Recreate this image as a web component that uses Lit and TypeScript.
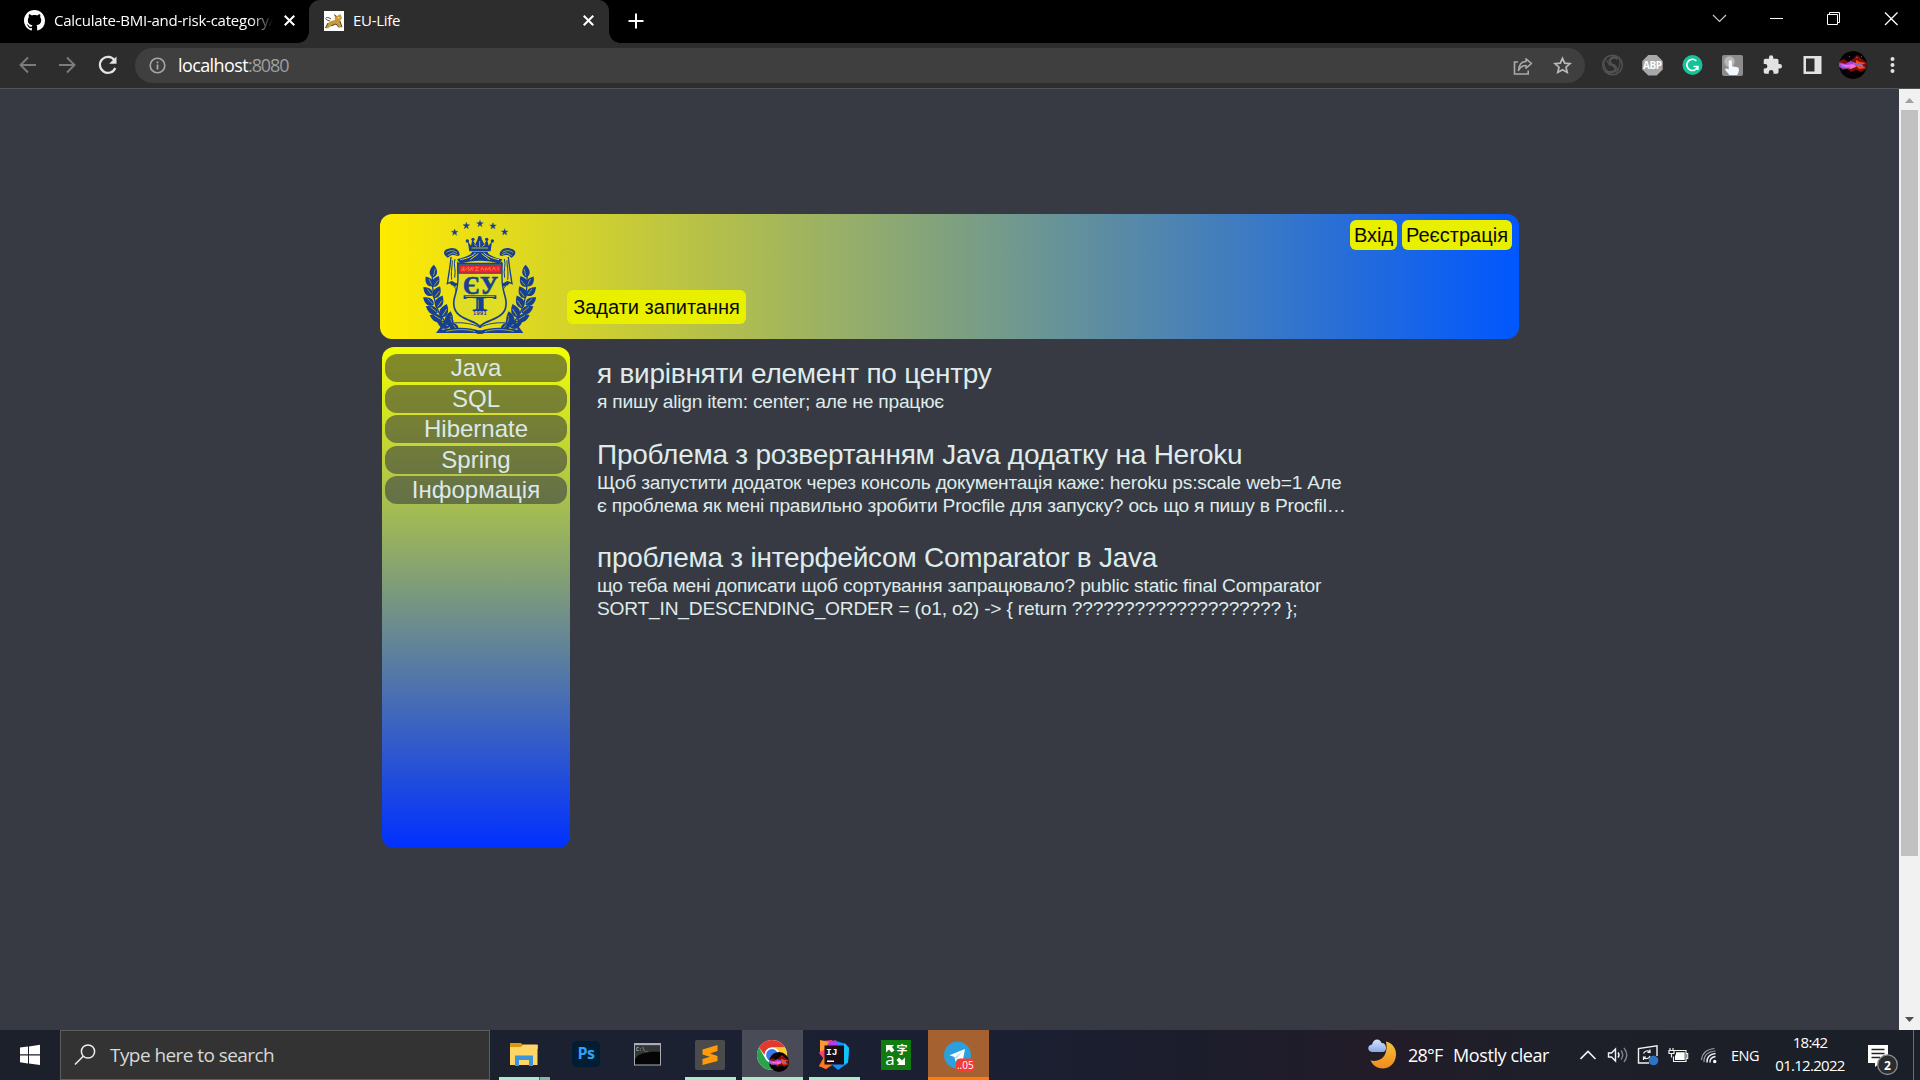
import { LitElement, html, svg, css } from "lit";
import { customElement } from "lit/decorators.js";

const closeIcon = html`<svg class="x" viewBox="0 0 12 12"><path d="M1.6 1.6 10.4 10.4M10.4 1.6 1.6 10.4" stroke="#fff" stroke-width="1.9" /></svg>`;

const star = (x: number, y: number) =>
  svg`<path transform="translate(${x} ${y})" d="M0-10 2.6-3.2 10-3 4 1.4 6.2 9 0 4.6-6.2 9-4 1.4-10-3-2.6-3.2Z" stroke="#173f93" stroke-width="1" />`;

const leaf = (x: number, y: number, r: number, s = 1) =>
  svg`<path transform="translate(${x} ${y}) rotate(${r}) scale(${s})" d="M0 0C-13-7-13-20 0-34 13-20 13-7 0 0Z" /><path transform="translate(${x} ${y}) rotate(${r}) scale(${s})" d="M1-5 4-23" stroke="#dcd92a" stroke-width="1.500" />`;

const halfWreath = svg`
  <path d="M122 340C84 326 48 280 52 172" fill="none" stroke="#173f93" stroke-width="4" />
  ${leaf(54, 188, 4, 1.15)}${leaf(52, 214, -34, 1.05)}${leaf(54, 216, 28, 1.1)}
  ${leaf(52, 242, -46, 1.1)}${leaf(56, 250, 28, 1.2)}${leaf(56, 270, -54, 1.15)}
  ${leaf(64, 280, 26, 1.25)}${leaf(68, 294, -60, 1.2)}${leaf(79, 308, 22, 1.3)}
  ${leaf(82, 316, -68, 1.2)}${leaf(98, 330, 12, 1.25)}${leaf(104, 336, -68, 1.2)}
  ${leaf(130, 349, -48, 1.15)}${leaf(112, 330, -24, 0.9)}`;

const halfMantle = svg`
  <path d="M98 128C82 118 84 104 100 101 118 95 134 104 134 120 128 128 124 118 112 120 104 121 104 126 98 128Z" />
  <path d="M94 113C102 106 116 104 126 113M98 122 114 113 128 120" fill="none" stroke="#dcd92a" stroke-width="2" />
  <path d="M108 126C106 152 101 178 97 206L110 200 122 209 130 204 128 140" fill="none" stroke="#173f93" stroke-width="4" />
  <path d="M112 136C112 156 107 168 110 194M120 132C114 150 124 164 119 188" fill="none" stroke="#173f93" stroke-width="3" />
  <path d="M103 204 112 199 127 206 122 215 110 211Z" />
  <path d="M116 214C128 222 120 232 122 242M130 210C138 222 128 236 124 248" fill="none" stroke="#173f93" stroke-width="3" />`;

const crest = html`<svg class="crest" viewBox="0 0 390 375">
  <g fill="#173f93">
    ${star(119, 52)}${star(154, 32)}${star(195, 26)}${star(234, 33)}${star(269, 51)}
    <g>${halfWreath}${halfMantle}</g>
    <g transform="matrix(-1 0 0 1 388 0)">${halfWreath}${halfMantle}</g>
    <path d="M158 78 168 92 172 73 181 88 188 72 194 64 200 72 208 88 216 73 221 92 231 78 227 109H163Z" />
    <circle cx="194" cy="69" r="6" /><circle cx="157" cy="78" r="5" /><circle cx="232" cy="78" r="5" /><circle cx="174" cy="73" r="5" /><circle cx="215" cy="73" r="5" />
    <path d="M170 99H219M178 88 186 94M202 94 211 88M194 78V96" stroke="#e0dd25" stroke-width="2.4" />
    <path d="M172 110H217C222 122 242 129 262 133L254 146C216 134 174 134 136 146L126 133C146 128 166 122 172 110Z" />
    <path d="M136 134C154 131 174 124 182 113M252 134C236 131 214 124 206 113M166 134 190 116M224 134 200 116" stroke="#e0dd25" stroke-width="3" fill="none" />
    <path d="M126 145H263V186C263 236 282 247 274 280 266 314 214 318 195 338 176 318 124 314 116 280 108 247 127 236 127 186Z" />
    <path d="M131 147H259V186C259 238 277 250 269 279 261 309 214 312 195 331 176 312 129 309 121 279 113 250 131 238 131 186Z" fill="#e0dd25" />
    <path d="M127 143H262V149H127Z" />
    <path d="M130 149H260V176H130Z" />
    <path d="M133 151H257V173H133Z" fill="#f0252b" />
    <path d="M139 166C146 150 151 157 143 166 154 168 154 155 162 158 153 173 170 162 171 157L166 167M176 157 172 167M180 158 190 157 181 167 192 167M197 166 202 157 207 166M211 167 213 158 218 165 224 157 226 167M231 166 237 157 242 166M247 158C254 157 250 167 247 164" fill="none" stroke="#f3a052" stroke-width="2" />
    <text x="197" y="236" class="cl">ЄУ</text>
    <path d="M146 241H244V252H238C235 248 226 248 206 250V279C206 284 212 283 217 284V288H173V284C180 283 184 284 184 279V250C164 248 155 248 152 252H146Z" />
    <path d="M151 244.500H239" stroke="#e0dd25" stroke-width="2" />
    <path d="M190 254V282" stroke="#e0dd25" stroke-width="1.500" />
    <text x="195" y="300" class="cy">1991</text>
    <path d="M92 316H104L80 345C120 336 160 336 190 346H200C230 336 270 336 310 345L286 316H297L325 354H208C202 358 188 358 182 354H63Z" />
    <path d="M94 349C130 341 160 343 180 350M210 350C230 343 260 341 296 349" fill="none" stroke="#e0dd25" stroke-width="2" />
    <path d="M106 325C140 320 176 326 195 338 214 326 250 320 284 325" fill="none" stroke="#173f93" stroke-width="3" />
  </g>
</svg>`;

const nebula = (cls: string) => html`<svg class=${cls} viewBox="0 0 28 28">
  <circle cx="14" cy="14" r="14" fill="#050004" />
  <path d="M0 10 5 8 9 11 14 8 18 4 23 8 28 12 27 18 22 21 17 19 12 21 8 18 3 19Z" fill="#7c1008" />
  <path d="M0 11 6 13 12 10 17 13 16 17 10 15 4 18 0 16Z" fill="#a640e0" />
  <path d="M1 13 8 14 14 13 18 15 12 18 5 16Z" fill="#ff6ad0" />
  <path d="M17 9 21 11 27 12 22 14 27 17 20 18 17 15Z" fill="#f8481c" />
  <path d="M2 15 7 17 11 16M14 12 18 13 24 15" stroke="#5b7bff" stroke-width="1.500" fill="none" />
  <path d="M17 6 19 7M22 5 23 6M10 5 11 6" stroke="#e0300c" />
</svg>`;

@customElement("browser-chrome")
class BrowserChrome extends LitElement {
  static styles = css`
    :host { display: block; font-family: "Open Sans", "Noto Sans", sans-serif; color: #fff; }
    svg { display: block; flex: none; }
    .tabs { height: 43px; background: #000; display: flex; align-items: center; }
    .tab { height: 43px; box-sizing: border-box; display: flex; align-items: center; font-size: 15px; }
    .first { width: 309px; padding: 0 0 2px 24px; }
    .active { width: 300px; background: #2d2d2d; border-radius: 11px 11px 0 0; padding: 0 0 2px 15px; position: relative; }
    .active::before, .active::after { content: ""; position: absolute; bottom: 0; width: 11px; height: 11px; }
    .active::before { left: -11px; background: radial-gradient(circle at 0 0, #000 10.500px, #2d2d2d 11px); }
    .active::after { right: -11px; background: radial-gradient(circle at 100% 0, #000 10.500px, #2d2d2d 11px); }
    .name { white-space: nowrap; overflow: hidden; line-height: 22px; padding-bottom: 1px; }
    .first .name { margin-left: 9px; width: 219px; letter-spacing: -0.24px; -webkit-mask-image: linear-gradient(90deg, #000 90%, transparent 100%); mask-image: linear-gradient(90deg, #000 90%, transparent 100%); }
    .active .name { margin-left: 9px; width: 227px; letter-spacing: -0.3px; }
    .x { width: 13px; height: 13px; }
    .first .x { margin-left: 10px; }
    .active .x { margin-left: 2px; }
    .plus { width: 16px; height: 16px; margin: 0 0 2px 19px; }
    .win { width: 220px; height: 36px; margin: 0 0 7px auto; }
    .bar { height: 45px; background: #2d2d2d; display: flex; align-items: center; }
    .nav { width: 135px; height: 45px; }
    .omni { width: 1450px; height: 35px; border-radius: 18px; background: #3f3f3f; display: flex; align-items: center; }
    .info { width: 17px; height: 17px; margin-left: 14px; }
    .url { margin-left: 12px; flex: 1; font-size: 18px; letter-spacing: -0.6px; line-height: 24px; padding-bottom: 1px; }
    .port { color: #9d9fa3; letter-spacing: -1.1px; }
    .acts { width: 95px; height: 35px; }
    .wrap { position: relative; width: 335px; height: 45px; }
    .face { position: absolute; left: 254px; top: 8px; width: 28px; height: 28px; border-radius: 50%; }
    .e { font: 700 10px "Open Sans", sans-serif; letter-spacing: -0.4px; }
  `;
  render() {
    return html`
      <div class="tabs">
        <div class="tab first">
          <svg width="21" height="21" viewBox="0 0 16 16"><path fill="#fff" d="M8 0C3.580 0 0 3.580 0 8c0 3.540 2.290 6.530 5.470 7.590.4.070.55-.17.55-.38 0-.19-.01-.82-.01-1.490-2.010.37-2.530-.49-2.690-.94-.09-.23-.48-.94-.82-1.130-.28-.15-.68-.52-.01-.53.63-.01 1.080.58 1.230.82.72 1.210 1.870.87 2.330.66.070-.52.28-.87.51-1.070-1.780-.2-3.640-.89-3.640-3.950 0-.87.31-1.590.82-2.150-.08-.2-.36-1.020.08-2.120 0 0 .67-.21 2.200.82.64-.18 1.320-.27 2-.27s1.360.09 2 .27c1.530-1.040 2.200-.82 2.200-.82.44 1.100.16 1.920.08 2.120.51.56.82 1.270.82 2.150 0 3.070-1.870 3.750-3.650 3.950.29.25.54.73.54 1.480 0 1.070-.01 1.930-.01 2.200 0 .21.15.46.55.38A8.010 8.010 0 0 0 16 8c0-4.420-3.580-8-8-8Z" /></svg>
          <div class="name">Calculate-BMI-and-risk-category/</div>
          ${closeIcon}
        </div>
        <div class="tab active">
          <svg width="20" height="20" viewBox="0 0 20 20">
            <path d="M0 0H20V20H0Z" fill="#fff" />
            <path d="M10.500 3.500 13 5 16.500 3 18 7 16 10 18 16.500 15 16.500 12 13 7 15 4 17.500 1 17 4 12 7 10 11 9Z" fill="#c99a3a" />
            <path d="M7 8C3 5 0 7 3 9L6 10M10.500 3.500 12 5.500M4 12 1.500 17M7 15 12 13 15 16.500M16 10 18 16" stroke="#2d2418" stroke-width=".8" fill="none" />
            <path d="M13 6 16 6 15 8Z" fill="#f3d36a" />
          </svg>
          <div class="name">EU-Life</div>
          ${closeIcon}
        </div>
        <svg class="plus" viewBox="0 0 16 16"><path d="M8 .5V15.500M.5 8H15.500" stroke="#fff" stroke-width="2" /></svg>
        <svg class="win" viewBox="0 0 220 36" fill="none" stroke="#fff">
          <path d="M13 15 19.500 21.500 26 15" stroke="#c8c8c8" stroke-width="1.200" />
          <path d="M70 18.500H83" />
          <path d="M127.500 14.500H137.500V24.500H127.500ZM129.500 14.500V12.500H139.500V22.500H137.500" />
          <path d="M185 12.500 197.500 25M197.500 12.500 185 25" stroke-width="1.300" />
        </svg>
      </div>
      <div class="bar">
        <svg class="nav" viewBox="0 0 135 45" fill="none" stroke="#7c7c7c" stroke-width="1.900">
          <path d="M36 22H21M28 14.500 20.500 22 28 29.500" />
          <path d="M59 22H74M67 14.500 74.500 22 67 29.500" />
          <path d="M114.500 17.300A8 8 0 1 0 115.300 25" stroke="#e4e4e4" stroke-width="2.200" />
          <path d="M116.500 13.500V20.800H109.200Z" fill="#e4e4e4" stroke="none" />
        </svg>
        <div class="omni">
          <svg class="info" viewBox="0 0 17 17"><circle cx="8.500" cy="8.500" r="7.300" fill="none" stroke="#a5a6aa" stroke-width="1.600" /><path d="M8.500 7.500V12.500M8.500 4.500V6.200" stroke="#a5a6aa" stroke-width="1.800" /></svg>
          <div class="url">localhost<span class="port">:8080</span></div>
          <svg class="acts" viewBox="1490 48 95 35" fill="none" stroke="#a9aaad" stroke-width="1.600">
            <path d="M1518 62H1514.500V74H1528.200V70.500" />
            <path d="M1518.500 70.500C1519 64.500 1521.500 61.500 1526 61.500V58.800L1531.500 63.500 1526 68.200V65.500C1522 65.500 1520 67.500 1518.500 70.500Z" stroke-linejoin="round" />
            <path d="M1562.500 58.300 1564.700 63.100 1570 63.700 1566 67.200 1567.200 72.400 1562.500 69.700 1557.800 72.400 1559 67.200 1555 63.700 1560.300 63.100Z" stroke="#b9babc" stroke-width="1.700" />
          </svg>
        </div>
        <div class="wrap">
          <svg class="wrap" viewBox="1585 43 335 45">
            <g fill="none" stroke="#525252">
              <circle cx="1612.500" cy="65" r="9.800" stroke-width="1.500" />
              <path d="M1618 59C1613 55 1607 60 1611 64L1615 67C1618 71 1611 74 1606 71" stroke-width="2.600" />
              <path d="M1604 60C1603 68 1607 72 1611 74M1619 57C1622 65 1618 70 1616 73M1605 58 1610 66M1620 72 1614 64" stroke-width="1.100" />
            </g>
            <path d="M1648.300 55H1656.700L1662.700 61V69.500L1656.700 75.500H1648.300L1642.300 69.500V61Z" fill="#a8a8a8" />
            <text x="1652.400" y="69" text-anchor="middle" fill="#fff" class="e">ABP</text>
            <circle cx="1692.500" cy="65" r="10" fill="#15c39a" />
            <path d="M1696.300 60.800A5.600 5.600 0 1 0 1697.800 66.500H1693.500M1697.800 66V70" fill="none" stroke="#fff" stroke-width="1.700" />
            <rect x="1722" y="55" width="21" height="21" rx="2" fill="#8c8c8c" />
            <circle cx="1729.500" cy="61.500" r="5.200" fill="#b8b8b8" />
            <path d="M1728.700 61.500C1728.700 59.700 1732 59.700 1732 61.500V66.300L1737.700 67.300C1739.700 68 1739.200 73 1737 75H1729.500L1725.200 70C1725 68 1727 68 1728.700 69.500Z" fill="#f2f7ff" />
            <path transform="translate(1762 54.500) scale(.87)" fill="#e2e2e2" d="M20.500 11H19V7c0-1.100-.9-2-2-2h-4V3.500a2.500 2.500 0 0 0-5 0V5H4c-1.100 0-2 .9-2 2v3.800h1.500a2.700 2.700 0 0 1 0 5.400H2V20c0 1.100.9 2 2 2h3.800v-1.500a2.700 2.700 0 0 1 5.400 0V22H17c1.100 0 2-.9 2-2v-4h1.500a2.500 2.500 0 0 0 0-5z" />
            <path d="M1803.500 56H1821.500V74H1803.500ZM1806 58.500V71.500H1814.500V58.500Z" fill="#e2e2e2" fill-rule="evenodd" />
            <g fill="#e2e2e2"><circle cx="1892.500" cy="59" r="2" /><circle cx="1892.500" cy="65" r="2" /><circle cx="1892.500" cy="71" r="2" /></g>
          </svg>
          ${nebula("face")}
        </div>
      </div>`;
  }
}

@customElement("site-page")
class SitePage extends LitElement {
  static styles = css`
    :host { display: flex; height: 942px; box-sizing: border-box; border-top: 1px solid #525355; background: #373a42; font-family: "Liberation Sans", Arial, sans-serif; }
    .page { width: 1899px; padding-top: 125px; }
    header { width: 1139px; height: 125px; margin-left: 380px; box-sizing: border-box; border-radius: 12px; background: linear-gradient(90deg, #ffeb00, #0057ff); display: flex; align-items: flex-start; padding: 6px 7px 0 35px; }
    .crest { width: 130px; height: 125px; margin-top: -5px; display: block; }
    .cl { font: 700 74px "Liberation Serif", serif; text-anchor: middle; letter-spacing: 1px; stroke: #173f93; stroke-width: 2px; }
    .cy { font: 700 17px "Liberation Sans", sans-serif; text-anchor: middle; letter-spacing: 1px; }
    .btn { background: #e8f000; color: #0a0a00; border-radius: 6px; font-size: 20px; height: 30px; line-height: 30px; text-align: center; white-space: nowrap; }
    .ask { width: 179px; height: 34px; line-height: 34px; margin: 70px auto 0 22px; }
    .in { width: 47px; }
    .reg { width: 110px; margin-left: 5px; }
    .body { display: flex; margin: 8px 0 0 382px; }
    nav { width: 188px; height: 501px; box-sizing: border-box; border-radius: 12px; padding: 7px 3px 0; background: linear-gradient(#f2ff00, #0030ff); display: flex; flex-direction: column; gap: 2.500px; }
    .item { height: 28px; line-height: 28px; border-radius: 12px; background: rgba(54, 57, 66, 0.58); color: #dde9e9; font-size: 24px; text-align: center; }
    main { margin: 11px 0 0 27px; color: #dfebea; width: 750px; }
    h2 { margin: 0; font-weight: 400; font-size: 28px; line-height: 32px; letter-spacing: -0.25px; white-space: nowrap; }
    p { margin: 0 0 25.700px; font-size: 19.200px; line-height: 23px; letter-spacing: -0.21px; white-space: nowrap; }
    .scroll { width: 21px; background: #f1f1f1; display: flex; flex-direction: column; align-items: center; }
    .thumb { width: 17px; height: 746px; background: #c1c1c1; }
    .scroll svg { display: block; width: 21px; height: 21px; }
    .down { margin-top: auto; }
  `;
  render() {
    const items = ["Java", "SQL", "Hibernate", "Spring", "Інформація"];
    const posts = [
      { t: "я вирівняти елемент по центру", b: ["я пишу align item: center; але не працює"] },
      { t: "Проблема з розвертанням Java додатку на Heroku", b: ["Щоб запустити додаток через консоль документація каже: heroku ps:scale web=1 Але", "є проблема як мені правильно зробити Procfile для запуску? ось що я пишу в Procfil…"] },
      { t: "проблема з інтерфейсом Comparator в Java", b: ["що теба мені дописати щоб сортування запрацювало? public static final Comparator", "SORT_IN_DESCENDING_ORDER = (o1, o2) -> { return ???????????????????? };"] },
    ];
    return html`
      <div class="page">
        <header>
          ${crest}
          <div class="btn ask">Задати запитання</div>
          <div class="btn in">Вхід</div>
          <div class="btn reg">Реєстрація</div>
        </header>
        <div class="body">
          <nav>${items.map((i) => html`<div class="item">${i}</div>`)}</nav>
          <main>${posts.map((p) => html`<h2>${p.t}</h2><p>${p.b.map((l, i) => (i ? html`<br />${l}` : l))}</p>`)}</main>
        </div>
      </div>
      <div class="scroll">
        <svg viewBox="0 0 21 21"><path d="M6 14H15L10.500 9Z" fill="#a0a0a0" /></svg>
        <div class="thumb"></div>
        <svg class="down" viewBox="0 0 21 21"><path d="M6 8H15L10.500 13Z" fill="#505050" /></svg>
      </div>`;
  }
}

@customElement("task-bar")
class TaskBar extends LitElement {
  static styles = css`
    :host { display: flex; height: 50px; background: linear-gradient(90deg, #1c202b, #1b2131 35%, #1a2033 50%, #1c1d2c 62%, #221c28 72%, #1d1f29 80%, #1b1f28); font-family: "Open Sans", "Noto Sans", sans-serif; color: #fff; }
    svg { display: block; flex: none; }
    .start { width: 60px; height: 50px; }
    .search { width: 430px; box-sizing: border-box; border: 1px solid #5d5d5d; background: #333; display: flex; align-items: center; padding-left: 13px; }
    .q { font-size: 19px; letter-spacing: -0.56px; color: #d8d8d8; margin-left: 14px; line-height: 24px; padding-bottom: 1px; }
    .apps { width: 510px; height: 50px; }
    .chromewrap { position: relative; width: 510px; height: 50px; }
    .mini { position: absolute; left: 279px; top: 22px; width: 20px; height: 20px; }
    .ps { font: 700 16px "Open Sans", sans-serif; letter-spacing: -0.4px; }
    .c { font: 5px "Liberation Mono", monospace; }
    .ij { font: 700 9.500px "Liberation Mono", monospace; }
    .zi { font: 700 11px "Noto Sans CJK SC", sans-serif; }
    .a { font: 17px "Open Sans", sans-serif; }
    .n5 { font: 10px "Open Sans", sans-serif; }
    .moon { margin-left: 367px; width: 30px; height: 50px; }
    .wx { margin-left: 11px; display: flex; gap: 10px; align-items: center; font-size: 18px; line-height: 24px; white-space: nowrap; }
    .deg { width: 35px; letter-spacing: -0.8px; }
    .cond { width: 97px; letter-spacing: -0.4px; }
    .tray { width: 146px; height: 50px; margin-left: 30px; }
    .eng { width: 29px; margin-left: 5px; font-size: 14.500px; letter-spacing: -0.5px; align-self: center; }
    .clock { width: 84px; margin-left: 8px; text-align: center; font-size: 15px; line-height: 23px; letter-spacing: -0.7px; padding-top: 1px; white-space: nowrap; }
    .note { width: 67px; height: 50px; }
    .two { font: 700 12px "Open Sans", sans-serif; }
  `;
  render() {
    return html`
      <svg class="start" viewBox="0 0 60 50"><path d="M20 17.600 28 16.500V24.300H20ZM29 16.400 40 14.800V24.300H29ZM20 25.400H28V33.400L20 32.300ZM29 25.400H40V35.100L29 33.500Z" fill="#fff" /></svg>
      <div class="search">
        <svg width="22" height="22" viewBox="0 0 22 22" fill="none" stroke="#f0f0f0" stroke-width="1.500"><circle cx="14" cy="7.500" r="6.600" /><path d="M9.200 12.200 1 20.500" /></svg>
        <span class="q">Type here to search</span>
      </div>
      <div class="chromewrap">
        <svg class="apps" viewBox="490 1030 510 50">
          <path d="M742 1030H803V1080H742Z" fill="#494c56" /><path d="M928 1030H989V1080H928Z" fill="#a5612f" />
          <g fill="#a6edcb"><path d="M499 1077H539V1080H499ZM685 1077H736V1080H685ZM742 1077H803V1080H742ZM809 1077H860V1080H809Z" /></g>
          <path d="M539.500 1077H550V1080H539.500Z" fill="#86b5a2" /><path d="M928 1077H989V1080H928Z" fill="#ff7a08" />
          <path d="M510 1043H521L523 1045H538V1049H510Z" fill="#d99a0c" />
          <path d="M510 1047H521L523 1044.500H537.500V1065H510Z" fill="#ffd566" />
          <path d="M515 1066V1055.500H533V1066H529V1060H519V1066Z" fill="#3a95dc" />
          <rect x="572" y="1041" width="28" height="26" rx="5" fill="#001d33" /><text x="586" y="1059" text-anchor="middle" fill="#2fa3f7" class="ps">Ps</text>
          <path d="M634 1043H661V1065.500H634Z" fill="#a8adb5" /><path d="M635 1045.500H660V1064.500H635Z" fill="#050505" /><path d="M635 1045.500H660V1052C650 1051 638 1053 635 1059Z" fill="#343537" />
          <text x="636" y="1051" fill="#ddd" class="c">C:\\_</text>
          <rect x="695" y="1040" width="30" height="30" rx="2" fill="#4b4b4b" />
          <path d="M702.500 1049.500 717.500 1045V1051L710 1053.500 717.500 1056V1061L702.500 1065V1059L710 1056.800 702.500 1054.500Z" fill="#ff9a0a" />
          <circle cx="772" cy="1055" r="15" fill="#fff" />
          <path d="M759 1047.500A15 15 0 0 1 785 1047.500H772A7.500 7.500 0 0 0 764.500 1055Z" fill="#e23b2e" />
          <path d="M785 1047.500A15 15 0 0 1 772 1070L778.500 1058.800A7.500 7.500 0 0 0 772 1047.500Z" fill="#fcc934" />
          <path d="M759 1047.500 765.500 1058.800A7.500 7.500 0 0 0 778.500 1058.800L772 1070A15 15 0 0 1 759 1047.500Z" fill="#2ba24c" />
          <circle cx="772" cy="1055" r="7.400" fill="#fff" /><circle cx="772" cy="1055" r="5.900" fill="#3b78e7" />
          <path d="M822 1041 832 1040 837 1047 836 1063 826 1069 819 1066 824 1059 819 1053 823 1048Z" fill="#fb3f6f" />
          <path d="M820 1040 829 1042 824 1050 820 1052Z" fill="#fc9a32" /><path d="M819 1066 824 1057 832 1064 826 1069Z" fill="#ff7a1f" />
          <path d="M836 1041 846 1044 849 1048 848 1063 838 1070 831 1064Z" fill="#188dfc" /><path d="M844 1043 849 1048 848 1062 843 1065Z" fill="#13c2fa" /><path d="M829 1042 836 1040 838 1048H827Z" fill="#b33af0" />
          <path d="M824.500 1045.500H844V1064.500H824.500Z" fill="#190d16" /><text x="826" y="1055" fill="#fff" class="ij">IJ</text><path d="M827 1060.500H834V1062H827Z" fill="#fff" />
          <path d="M881 1040H911V1070H881Z" fill="#107c10" />
          <path d="M886 1045H894L892 1047 894.500 1050.500 891.500 1052.500 889 1049.500 886 1052.500ZM905 1065H897L899 1063 896.500 1060 899 1057.500 902 1060.500 905 1057.500Z" fill="#fff" />
          <text x="902" y="1054" text-anchor="middle" fill="#fff" class="zi">字</text><text x="890" y="1065" text-anchor="middle" fill="#fff" class="a">a</text>
          <circle cx="957.500" cy="1055" r="13.500" fill="#2ba0dc" /><path d="M949.500 1055.200 965 1049 962.500 1062 957.500 1059 955.500 1062 954.500 1057Z" fill="#fff" />
          <path d="M955 1057 962 1051.500 956.500 1059Z" fill="#bcdcef" />
          <rect x="956" y="1058.500" width="18.500" height="13.500" rx="4.500" fill="#f23c34" /><text x="965.300" y="1069" text-anchor="middle" fill="#fff" class="n5">..05</text>
        </svg>
        ${nebula("mini")}
      </div>
      <svg class="moon" viewBox="0 0 30 50">
        <defs><linearGradient id="m" x2="0" y2="1"><stop stop-color="#f6c33a" /><stop offset="1" stop-color="#f08a1e" /></linearGradient><linearGradient id="k" x2="0" y2="1"><stop stop-color="#d9e6ff" /><stop offset="1" stop-color="#86a9e8" /></linearGradient></defs>
        <path d="M19 11.500C25 13 29.500 18 29 25.500 28 36 19 40 12 38 7.500 36.800 5 33.500 3.500 30.500 14 33 22 25 19 11.500Z" fill="url(#m)" />
        <path d="M5 22C0 21.500 0 15 5 14.500 6 8.500 13 7.500 14.500 13 20 13 20.500 21.500 16 22Z" fill="url(#k)" />
      </svg>
      <div class="wx"><span class="deg">28°F</span><span class="cond">Mostly clear</span></div>
      <svg class="tray" viewBox="1579 1030 146 50" fill="none" stroke="#f2f2f2" stroke-width="1.400">
        <path d="M1579.500 1059 1587 1051.500 1594.500 1059" stroke-width="1.600" />
        <path d="M1607.500 1057V1053H1610.500L1614.500 1049V1061L1610.500 1057Z" />
        <path d="M1617 1052.500Q1619 1055 1617 1057.500" /><path d="M1620 1050.500Q1623.500 1055 1620 1059.500M1623 1048Q1628.500 1055 1623 1062" stroke="#80838a" />
        <path d="M1648 1063H1637.500V1048.500L1656 1045.800V1056" /><path d="M1642.500 1053.500A4 4 0 0 1 1649 1052V1049.500M1649 1052.500H1646.500M1649 1056A4 4 0 0 1 1642.500 1057.500V1060M1642.500 1057H1645" stroke-width="1.200" />
        <circle cx="1652.500" cy="1060.500" r="4.800" fill="#2d74c4" stroke="none" />
        <path d="M1673 1050.500H1685V1061.500H1672.500V1056.500M1685 1053.500H1686.700V1058.500H1685" stroke-width="1.100" /><path d="M1675 1052.300H1683.700V1060H1674V1056L1675 1054Z" fill="#fff" stroke="none" /><path d="M1668 1050.500V1053.500H1673V1050.500ZM1669 1048V1050M1672 1048V1050M1670.500 1054V1057.500" stroke-width="1.200" />
        <circle cx="1713.700" cy="1061.500" r="1.700" fill="#fff" stroke="none" />
        <path d="M1709 1062.500Q1708.500 1057.500 1714.500 1056.500M1706 1062.500Q1705.500 1054.500 1714.500 1053.500" /><path d="M1703 1062Q1702.500 1052 1714.500 1051M1700.500 1060Q1701.500 1049.500 1713.500 1048.500" stroke="#9da0a6" stroke-width="1.200" />
      </svg>
      <span class="eng">ENG</span>
      <div class="clock">18:42<br />01.12.2022</div>
      <svg class="note" viewBox="1853 1030 67 50">
        <path d="M1869 1045H1889V1063H1881L1876 1067V1063H1869Z" fill="#fff" /><path d="M1872.500 1049.500H1885.500M1872.500 1053.500H1885.500M1872.500 1057.500H1881" stroke="#20232b" stroke-width="1.400" />
        <circle cx="1888.500" cy="1064.700" r="9.800" fill="#2b2c30" stroke="#8a8b8d" stroke-width="1.300" /><text x="1888.500" y="1069.500" text-anchor="middle" fill="#fff" class="two">2</text>
        <path d="M1914.500 1030V1080" stroke="#6b6d73" />
      </svg>`;
  }
}

@customElement("app-root")
class AppRoot extends LitElement {
  static styles = css`
    :host { display: block; width: 1920px; height: 1080px; overflow: hidden; }
  `;
  render() {
    return html`<browser-chrome></browser-chrome><site-page></site-page><task-bar></task-bar>`;
  }
}
